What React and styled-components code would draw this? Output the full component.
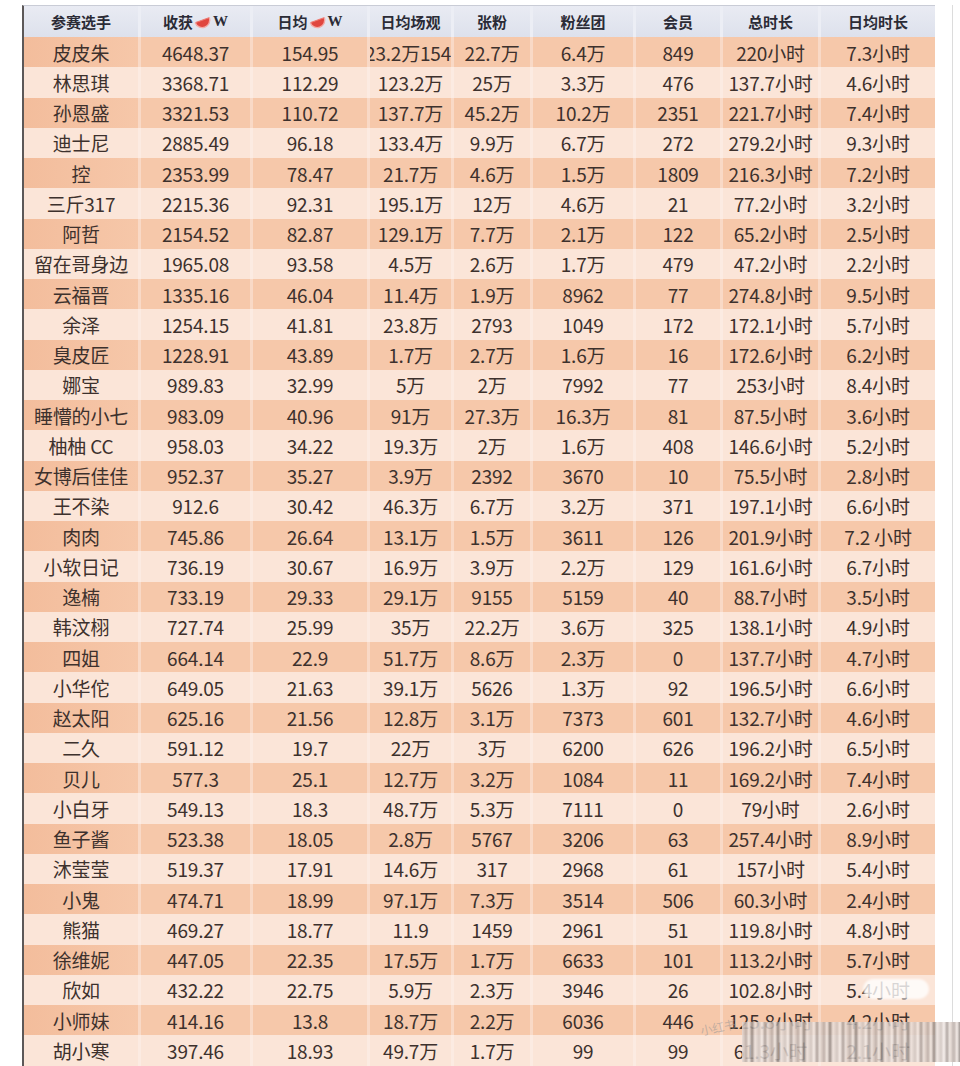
import React from "react";
import styled, { createGlobalStyle } from "styled-components";

const Global = createGlobalStyle`
  html, body { margin: 0; padding: 0; background: #ffffff; }
  body { font-family: "Noto Sans CJK SC", "Noto Sans", sans-serif; overflow: hidden; }
`;

const COLS = "114px 109px 114px 81px 76px 100px 84px 95px 114px";

const Page = styled.div`
  position: relative;
  width: 960px;
  height: 1066px;
  overflow: hidden;
  display: flex;
  padding-top: 5px;
  box-sizing: border-box;
`;

const LeftGutter = styled.div`
  width: 22px;
  flex: none;
`;

const Table = styled.div`
  width: 911px;
  flex: none;
  border-left: 2px solid #5c5858;
  border-top: 1px solid #c9ccd6;
  display: flex;
  flex-direction: column;
`;

const RightFrame = styled.div`
  width: 17px;
  flex: none;
  border-right: 1px solid #dcdcdc;
`;

const HeaderRow = styled.div`
  display: grid;
  grid-template-columns: ${COLS};
  column-gap: 3px;
  height: 31px;
  background: #eceef5;
`;

const HeadCell = styled.div`
  display: flex;
  align-items: center;
  justify-content: center;
  gap: 1px;
  background: linear-gradient(#e9ebf3, #dde1ec);
  font-size: 15px;
  font-weight: 700;
  color: #2b2b36;
  white-space: nowrap;
`;

const Wbadge = styled.span`
  font-family: "Liberation Serif", serif;
  font-weight: 700;
  font-size: 15px;
  color: #2b2b36;
`;

const Row = styled.div`
  display: grid;
  grid-template-columns: ${COLS};
  column-gap: 3px;
  height: 30.25px;
  background: ${(p) => (p.$dark ? "#f9d9c6" : "#fcebe2")};
`;

const Cell = styled.div`
  display: flex;
  align-items: center;
  justify-content: ${(p) => (p.$end ? "flex-end" : "center")};
  overflow: hidden;
  white-space: nowrap;
  background: ${(p) =>
    p.$dark
      ? p.$first
        ? "linear-gradient(90deg, #f3bd9c, #f6c7a9)"
        : "#f6c8aa"
      : "#fbe5d8"};
  font-size: 19px;
  color: #3d312d;
  letter-spacing: -0.2px;
`;

const Mosaic = styled.div`
  position: absolute;
  left: 742px;
  top: 1022px;
  width: 218px;
  height: 40px;
  opacity: 0.85;
  background: repeating-linear-gradient(
    90deg,
    #e8dcd6 0px,
    #b9aca6 4px,
    #f1e8e3 7px,
    #8f8580 10px,
    #ede3de 13px,
    #cfc4bf 17px,
    #f4ece8 20px,
    #a89d98 23px,
    #efe6e1 26px
  );
  filter: blur(0.6px);
`;

const WatermarkText = styled.div`
  position: absolute;
  left: 700px;
  top: 1018px;
  font-size: 12px;
  color: rgba(150, 150, 150, 0.55);
  transform: rotate(-12deg);
`;

const Pill = styled.div`
  position: absolute;
  left: 863px;
  top: 979px;
  width: 66px;
  height: 20px;
  border-radius: 10px;
  background: rgba(255, 255, 255, 0.8);
  filter: blur(1px);
`;

function Melon() {
  return (
    <svg width="18" height="14" viewBox="0 0 18 14">
      <g transform="rotate(-20 9 7)">
        <path d="M1.5 5 A7.5 7.5 0 0 0 16.5 5 Z" fill="#e0463f" />
        <path d="M1.5 5 A7.5 7.5 0 0 0 16.5 5" fill="none" stroke="#f4aaa6" strokeWidth="1.4" />
        <path d="M2 5 L16 5" stroke="#ee7a72" strokeWidth="1" />
      </g>
    </svg>
  );
}

const headers = [
  { t: "参赛选手" },
  { t: "收获", icon: true },
  { t: "日均", icon: true },
  { t: "日均场观" },
  { t: "张粉" },
  { t: "粉丝团" },
  { t: "会员" },
  { t: "总时长" },
  { t: "日均时长" },
];

const data = [
  ["皮皮朱", "4648.37", "154.95", "23.2万154", "22.7万", "6.4万", "849", "220小时", "7.3小时"],
  ["林思琪", "3368.71", "112.29", "123.2万", "25万", "3.3万", "476", "137.7小时", "4.6小时"],
  ["孙恩盛", "3321.53", "110.72", "137.7万", "45.2万", "10.2万", "2351", "221.7小时", "7.4小时"],
  ["迪士尼", "2885.49", "96.18", "133.4万", "9.9万", "6.7万", "272", "279.2小时", "9.3小时"],
  ["控", "2353.99", "78.47", "21.7万", "4.6万", "1.5万", "1809", "216.3小时", "7.2小时"],
  ["三斤317", "2215.36", "92.31", "195.1万", "12万", "4.6万", "21", "77.2小时", "3.2小时"],
  ["阿哲", "2154.52", "82.87", "129.1万", "7.7万", "2.1万", "122", "65.2小时", "2.5小时"],
  ["留在哥身边", "1965.08", "93.58", "4.5万", "2.6万", "1.7万", "479", "47.2小时", "2.2小时"],
  ["云福晋", "1335.16", "46.04", "11.4万", "1.9万", "8962", "77", "274.8小时", "9.5小时"],
  ["余泽", "1254.15", "41.81", "23.8万", "2793", "1049", "172", "172.1小时", "5.7小时"],
  ["臭皮匠", "1228.91", "43.89", "1.7万", "2.7万", "1.6万", "16", "172.6小时", "6.2小时"],
  ["娜宝", "989.83", "32.99", "5万", "2万", "7992", "77", "253小时", "8.4小时"],
  ["睡懵的小七", "983.09", "40.96", "91万", "27.3万", "16.3万", "81", "87.5小时", "3.6小时"],
  ["柚柚 CC", "958.03", "34.22", "19.3万", "2万", "1.6万", "408", "146.6小时", "5.2小时"],
  ["女博后佳佳", "952.37", "35.27", "3.9万", "2392", "3670", "10", "75.5小时", "2.8小时"],
  ["王不染", "912.6", "30.42", "46.3万", "6.7万", "3.2万", "371", "197.1小时", "6.6小时"],
  ["肉肉", "745.86", "26.64", "13.1万", "1.5万", "3611", "126", "201.9小时", "7.2 小时"],
  ["小软日记", "736.19", "30.67", "16.9万", "3.9万", "2.2万", "129", "161.6小时", "6.7小时"],
  ["逸楠", "733.19", "29.33", "29.1万", "9155", "5159", "40", "88.7小时", "3.5小时"],
  ["韩汶栩", "727.74", "25.99", "35万", "22.2万", "3.6万", "325", "138.1小时", "4.9小时"],
  ["四姐", "664.14", "22.9", "51.7万", "8.6万", "2.3万", "0", "137.7小时", "4.7小时"],
  ["小华佗", "649.05", "21.63", "39.1万", "5626", "1.3万", "92", "196.5小时", "6.6小时"],
  ["赵太阳", "625.16", "21.56", "12.8万", "3.1万", "7373", "601", "132.7小时", "4.6小时"],
  ["二久", "591.12", "19.7", "22万", "3万", "6200", "626", "196.2小时", "6.5小时"],
  ["贝儿", "577.3", "25.1", "12.7万", "3.2万", "1084", "11", "169.2小时", "7.4小时"],
  ["小白牙", "549.13", "18.3", "48.7万", "5.3万", "7111", "0", "79小时", "2.6小时"],
  ["鱼子酱", "523.38", "18.05", "2.8万", "5767", "3206", "63", "257.4小时", "8.9小时"],
  ["沐莹莹", "519.37", "17.91", "14.6万", "317", "2968", "61", "157小时", "5.4小时"],
  ["小鬼", "474.71", "18.99", "97.1万", "7.3万", "3514", "506", "60.3小时", "2.4小时"],
  ["熊猫", "469.27", "18.77", "11.9", "1459", "2961", "51", "119.8小时", "4.8小时"],
  ["徐维妮", "447.05", "22.35", "17.5万", "1.7万", "6633", "101", "113.2小时", "5.7小时"],
  ["欣如", "432.22", "22.75", "5.9万", "2.3万", "3946", "26", "102.8小时", "5.4小时"],
  ["小师妹", "414.16", "13.8", "18.7万", "2.2万", "6036", "446", "125.8小时", "4.2小时"],
  ["胡小寒", "397.46", "18.93", "49.7万", "1.7万", "99", "99", "61.3小时", "2.1小时"],
];

export default function App() {
  return (
    <>
      <Global />
      <Page>
        <LeftGutter />
        <Table>
          <HeaderRow>
            {headers.map((h, i) => (
              <HeadCell key={i}>
                {h.t}
                {h.icon && (
                  <>
                    <Melon />
                    <Wbadge>W</Wbadge>
                  </>
                )}
              </HeadCell>
            ))}
          </HeaderRow>
          {data.map((r, ri) => {
            const dark = ri % 2 === 0;
            return (
              <Row key={ri} $dark={dark}>
                {r.map((v, ci) => (
                  <Cell
                    key={ci}
                    $dark={dark}
                    $first={ci === 0}
                    $end={ri === 0 && ci === 3}
                  >
                    {v}
                  </Cell>
                ))}
              </Row>
            );
          })}
        </Table>
        <RightFrame />
        <Pill />
        <WatermarkText>小红书</WatermarkText>
        <Mosaic />
      </Page>
    </>
  );
}
